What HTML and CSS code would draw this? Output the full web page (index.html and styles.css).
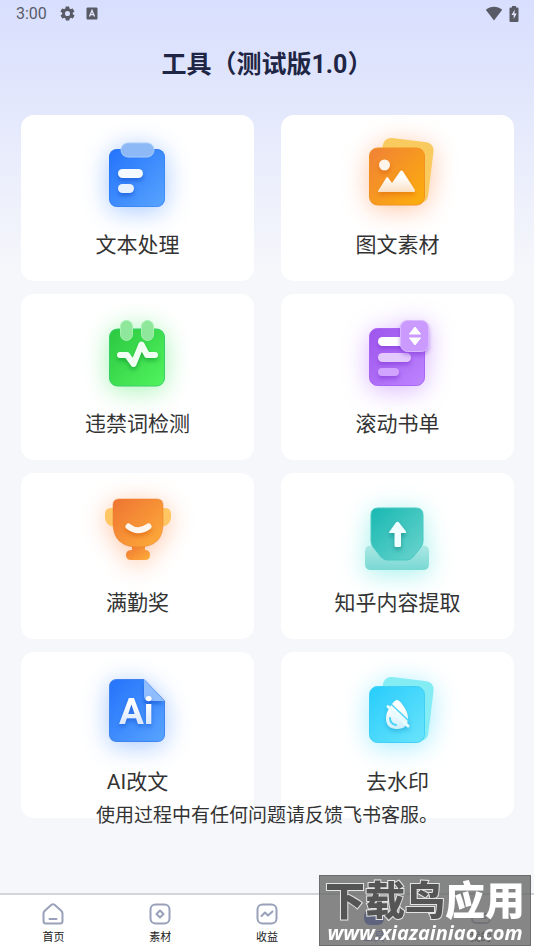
FILE: index.html
```html
<!DOCTYPE html>
<html lang="zh-CN">
  <head>
    <meta charset="UTF-8" />
    <meta name="viewport" content="width=device-width, initial-scale=1.0" />
    <title>工具</title>
    <link rel="stylesheet" href="styles.css">
  </head>
  <body>
    <div class="status-bar">
      <span class="clock">3:00</span>
      <svg class="status-icon" viewBox="0 0 24 24" width="17" height="17">
        <path fill="#585b66" d="M19.4 13a7.500 7.500 0 0 0 0-2l2.100-1.600a.5.5 0 0 0 .1-.7l-2-3.400a.5.5 0 0 0-.6-.2l-2.500 1a7.300 7.300 0 0 0-1.700-1l-.4-2.600a.5.500 0 0 0-.5-.4h-4a.5.500 0 0 0-.5.4l-.4 2.600a7.300 7.300 0 0 0-1.700 1l-2.500-1a.5.5 0 0 0-.6.2l-2 3.400a.5.500 0 0 0 .1.7L4.600 11a7.500 7.500 0 0 0 0 2l-2.100 1.600a.5.500 0 0 0-.1.7l2 3.400c.1.200.4.300.6.200l2.500-1a7.300 7.300 0 0 0 1.700 1l.4 2.600c0 .2.200.4.500.4h4c.3 0 .5-.2.500-.4l.4-2.600a7.300 7.300 0 0 0 1.700-1l2.500 1c.2.1.5 0 .6-.2l2-3.400a.5.500 0 0 0-.1-.7zM12 15.600a3.600 3.600 0 1 1 0-7.200 3.600 3.600 0 0 1 0 7.200z" />
      </svg>
      <svg class="status-icon" viewBox="0 0 12 13" width="12" height="13">
        <rect x="0.500" y="0.500" width="11" height="12" rx="1" fill="#585b66" />
        <path d="M3.500 9.500L6 3.500l2.500 6M4.500 7.700h3" fill="none" stroke="#e2e6fb" stroke-width="1.300" />
      </svg>
      <svg class="status-icon wifi" viewBox="0 0 18 15" width="18" height="15">
        <path d="M9 14.500L.8 3.800C5.500-.2 12.500-.2 17.200 3.800z" fill="#585b66" />
      </svg>
      <svg class="status-icon" viewBox="0 0 10 16" width="10" height="16">
        <path d="M3 0h4v1.500h1.500q1 0 1 1V15q0 1-1 1h-7q-1 0-1-1V2.500q0-1 1-1H3z" fill="#585b66" />
        <path d="M5.800 3.500L2.500 9h2.200v4l3-5.500H5.400z" fill="#e2e6fb" />
      </svg>
    </div>

    <h1>工具（测试版1.0）</h1>

    <main>
      <div class="tools">
        <button type="button" class="card blue">
          <svg viewBox="-2 0 120 100" aria-hidden="true">
            <defs>
              <linearGradient id="blueFill" x1="0" y1="0" x2="1" y2="1">
                <stop offset="0" stop-color="#2473fb" />
                <stop offset="1" stop-color="#58a4ff" />
              </linearGradient>
              <linearGradient id="whiteFade" x1="0" y1="0" x2="0" y2="1">
                <stop offset="0.3" stop-color="#fff" />
                <stop offset="1" stop-color="#fff" stop-opacity="0.75" />
              </linearGradient>
            </defs>
            <rect x="29" y="24" width="56" height="58" rx="8" fill="url(#blueFill)" />
            <rect x="29.500" y="24.500" width="55" height="57" rx="8" fill="none" stroke="#2672e8" stroke-opacity="0.4" />
            <rect x="41" y="18" width="33" height="14" rx="7" fill="#8db9f7" stroke="#a8cbfc" />
            <g class="raised">
              <rect x="38" y="44" width="25" height="9" rx="4.500" fill="#f4f8ff" />
              <rect x="38" y="59" width="16" height="9" rx="4.500" fill="#e8f1ff" />
            </g>
          </svg>
          <span>文本处理</span>
        </button>

        <button type="button" class="card orange">
          <svg viewBox="-2 0 120 100" aria-hidden="true">
            <defs>
              <linearGradient id="photoFill" x1="0" y1="0" x2="1" y2="1">
                <stop offset="0" stop-color="#f08137" />
                <stop offset="1" stop-color="#fdb00a" />
              </linearGradient>
            </defs>
            <rect x="40" y="15" width="51" height="61" rx="8" transform="rotate(7 66 45)" fill="#f9ca5d" />
            <rect x="29.500" y="23" width="55" height="57" rx="8" fill="url(#photoFill)" stroke="#f29222" />
            <g class="raised">
              <circle cx="44.500" cy="40" r="5.500" fill="#fff5ea" />
              <path d="M38 66L46.500 52.500Q47 51.500 48 52.500L52 58 60 46.500Q61.500 44.500 63 46.500L75 65Q75.500 67 74 67H39Q37.500 67 38 66z" fill="url(#whiteFade)" />
            </g>
          </svg>
          <span>图文素材</span>
        </button>

        <button type="button" class="card green">
          <svg viewBox="-2 -1 120 100" aria-hidden="true">
            <defs>
              <linearGradient id="greenFill" x1="0" y1="0" x2="1" y2="1">
                <stop offset="0" stop-color="#2bc841" />
                <stop offset="1" stop-color="#52f45f" />
              </linearGradient>
            </defs>
            <rect x="29.500" y="24" width="55" height="57" rx="8" fill="url(#greenFill)" stroke="#37cf67" />
            <rect x="40.500" y="15.500" width="12" height="20" rx="6" fill="#8ee79b" stroke="#a6f0af" />
            <rect x="61.500" y="15.500" width="12" height="20" rx="6" fill="#8ee79b" stroke="#a6f0af" />
            <path class="raised" d="M40 50H47L53.500 59 61.500 39.500 67 50H75" fill="none" stroke="#f1fff2" stroke-width="6" stroke-linecap="round" stroke-linejoin="round" />
          </svg>
          <span>违禁词检测</span>
        </button>

        <button type="button" class="card purple">
          <svg viewBox="-2 -1 120 100" aria-hidden="true">
            <defs>
              <linearGradient id="purpleFill" x1="0" y1="0" x2="1" y2="1">
                <stop offset="0" stop-color="#9e54ec" />
                <stop offset="1" stop-color="#bd85ff" />
              </linearGradient>
            </defs>
            <rect x="29.500" y="23.500" width="55" height="57" rx="8" fill="url(#purpleFill)" stroke="#aa64f3" />
            <g class="raised">
              <rect x="38" y="32" width="34" height="9" rx="4.500" fill="#fff" />
              <rect x="38" y="48" width="33" height="9" rx="4.500" fill="#e4c9ff" />
              <rect x="38" y="63" width="21" height="8" rx="4" fill="#d1a4ff" />
            </g>
            <rect class="raised" x="60.500" y="15.500" width="28" height="31" rx="7" fill="#cb9aff" stroke="#dab8ff" />
            <path d="M75 22L80.500 29H69.500zM75 40L69.500 33H80.500z" fill="#fff" stroke="#fff" stroke-linejoin="round" />
          </svg>
          <span>滚动书单</span>
        </button>

        <button type="button" class="card orange">
          <svg viewBox="-2 -2 120 100" aria-hidden="true">
            <defs>
              <linearGradient id="cupFill" x1="0" y1="0" x2="1" y2="1">
                <stop offset="0" stop-color="#ee7432" />
                <stop offset="1" stop-color="#feae3a" />
              </linearGradient>
            </defs>
            <path d="M36 23H31Q25 23 25 29V31Q25 42 37 42zM79 23H85Q91 23 91 29V31Q91 42 78 42z" fill="#ffc663" />
            <path d="M52 60H65V65Q70 65 70 70 70 75 65 75H51Q46 75 46 70 46 65 52 65z" fill="url(#cupFill)" />
            <path d="M39 14H77Q83 14 83 20V39Q83 62 58 62 33 62 33 38V20Q33 14 39 14z" fill="url(#cupFill)" stroke="#e87d2b" stroke-opacity="0.5" />
            <path class="raised" d="M48.500 41.500Q58 49 68.500 41.500" fill="none" stroke="#fff7ed" stroke-width="6" stroke-linecap="round" />
          </svg>
          <span>满勤奖</span>
        </button>

        <button type="button" class="card teal">
          <svg viewBox="-2 -2 120 100" aria-hidden="true">
            <defs>
              <linearGradient id="tealFill" x1="0" y1="0" x2="1" y2="1">
                <stop offset="0" stop-color="#18b8b2" />
                <stop offset="1" stop-color="#6bd4cd" />
              </linearGradient>
              <linearGradient id="trayFill" x1="0" y1="0" x2="0" y2="1">
                <stop offset="0" stop-color="#abe8e4" />
                <stop offset="1" stop-color="#79d8d3" />
              </linearGradient>
            </defs>
            <path d="M31 60.500H83Q89 60.500 89 66.500V79Q89 85 83 85H31Q25 85 25 79V66.500Q25 60.500 31 60.500z" fill="url(#trayFill)" />
            <path d="M38 23H76Q83 23 83 30V56Q83 59 81 62L73 72Q70 75 67 75H47Q44 75 41 72L33 62Q31 59 31 56V30Q31 23 38 23z" fill="url(#tealFill)" stroke="#49c9c2" />
            <path class="raised" d="M56 37.500Q57.500 36 59 37.500L66 46.500Q66.500 48 65 48H61V60.500Q61 62 59.500 62H56Q54.500 62 54.500 60.500V48H50Q48.500 48 49.500 46.500z" fill="#f0ffff" />
          </svg>
          <span>知乎内容提取</span>
        </button>

        <button type="button" class="card blue">
          <svg viewBox="-2 -3 120 100" aria-hidden="true">
            <path d="M37 14.500H64L84.500 36V69Q84.500 76.500 77 76.500H37Q29.500 76.500 29.500 69V22Q29.500 14.500 37 14.500z" fill="url(#blueFill)" stroke="#3f84ee" />
            <path class="raised" d="M64 14.500L84.500 36H69Q64 36 64 31z" fill="#90bdfd" />
            <text class="raised ai-text" x="39" y="59" fill="url(#whiteFade)">Ai</text>
          </svg>
          <span>AI改文</span>
        </button>

        <button type="button" class="card cyan">
          <svg viewBox="-2 -3 120 100" aria-hidden="true">
            <defs>
              <linearGradient id="cyanFill" x1="0" y1="0" x2="1" y2="1">
                <stop offset="0" stop-color="#27ccfc" />
                <stop offset="1" stop-color="#6ae4fb" />
              </linearGradient>
            </defs>
            <rect x="40" y="14" width="51" height="60" rx="8" transform="rotate(7 66 45)" fill="#84edf4" />
            <rect x="29.500" y="21.500" width="55" height="56" rx="8" fill="url(#cyanFill)" stroke="#40d0f5" />
            <g class="raised">
              <path d="M57 35Q59 35 62 39 68 47 68 53 68 64 57 64 46 64 46 53 46 47 52 39 55 35 57 35z" fill="url(#whiteFade)" />
              <path d="M50 53Q50 59 56 60" fill="none" stroke="#4bd5fa" stroke-width="2" stroke-linecap="round" />
              <path d="M51 39L70 57" stroke="#4bd5fa" stroke-width="1.500" />
              <path d="M48 41.500L68 61" stroke="#e8fcff" stroke-width="3" stroke-linecap="round" />
            </g>
          </svg>
          <span>去水印</span>
        </button>
      </div>
      <p class="note">使用过程中有任何问题请反馈飞书客服。</p>
    </main>

    <nav class="tab-bar">
      <a href="#">
        <svg viewBox="0 0 22 22" aria-hidden="true">
          <path d="M3 7.500L9.500 1.800Q11 .7 12.500 1.800L19 7.500Q20.500 9 20.500 10.500V18Q20.500 20.500 18 20.500H4Q1.500 20.500 1.500 18V10.500Q1.500 9 3 7.500zM7.500 16H14.500" />
        </svg>
        首页
      </a>
      <a href="#">
        <svg viewBox="0 0 22 22" aria-hidden="true">
          <rect x="1.500" y="1.500" width="19" height="19" rx="5" />
          <path d="M11 7.500L14.500 11 11 14.500 7.500 11z" />
        </svg>
        素材
      </a>
      <a href="#">
        <svg viewBox="0 0 22 22" aria-hidden="true">
          <rect x="1.500" y="1.500" width="19" height="19" rx="5" />
          <path d="M5.500 13L9 9.500 12 12.500 16.500 8.500" />
        </svg>
        收益
      </a>
      <a href="#" class="active">
        <svg viewBox="0 0 22 22" aria-hidden="true">
          <rect x="2" y="8" width="18" height="13" rx="5" />
          <path d="M7 7V4Q7 1.500 11 1.500T15 4V7" />
        </svg>
        工具
      </a>
      <a href="#">
        <svg viewBox="0 0 22 22" aria-hidden="true">
          <rect x="2" y="11" width="18" height="9" rx="4" />
          <path d="M12 15H16" />
        </svg>
        我的
      </a>
    </nav>

    <div class="watermark">
      <div class="mark-name"><span>下载鸟</span>应用</div>
      <div class="mark-url">www.xiazainiao.com</div>
    </div>
  </body>
</html>
```
FILE: styles.css
```css
* {
  margin: 0;
  padding: 0;
  box-sizing: border-box;
}
body {
  display: flex;
  flex-direction: column;
  min-height: 100vh;
  font-family: Roboto, "Noto Sans CJK SC", sans-serif;
  color: #333;
  background: #f6f7fb linear-gradient(#d8dffe, #e2e7fc 100px, #f6f7fb 270px) no-repeat;
}
.status-bar {
  display: flex;
  align-items: center;
  height: 27px;
  padding: 0 15px 0 16px;
  color: #585b66;
}
.clock {
  font-size: 16px;
  margin-right: 12px;
}
.status-icon {
  margin-right: 10px;
}
.status-icon:last-child {
  margin-right: 0;
}
.wifi {
  margin-left: auto;
  margin-right: 6px;
}
h1 {
  height: 88px;
  padding-top: 20px;
  font-size: 25px;
  line-height: 36px;
  font-weight: 700;
  text-align: center;
  color: #1f2544;
}
.tools {
  display: grid;
  grid-template-columns: 1fr 1fr;
  gap: 13px 27px;
  padding: 0 20px 0 21px;
}
.card {
  display: flex;
  flex-direction: column;
  align-items: center;
  height: 166px;
  padding-top: 10px;
  border: none;
  border-radius: 13px;
  background: #fff;
  font-family: inherit;
  font-size: 21px;
  line-height: 32px;
  color: #333;
  cursor: pointer;
}
.card svg {
  width: 120px;
  height: 100px;
  margin-bottom: 4px;
  overflow: visible;
  filter: drop-shadow(0 4px 13px var(--glow));
}
.blue {
  --glow: rgba(60, 135, 255, 0.45);
  --shade: rgba(10, 70, 200, 0.5);
}
.orange {
  --glow: rgba(255, 130, 60, 0.45);
  --shade: rgba(210, 80, 0, 0.45);
}
.green {
  --glow: rgba(60, 230, 90, 0.45);
  --shade: rgba(0, 130, 30, 0.45);
}
.purple {
  --glow: rgba(170, 90, 255, 0.45);
  --shade: rgba(110, 30, 200, 0.4);
}
.teal {
  --glow: rgba(50, 225, 215, 0.45);
  --shade: rgba(0, 110, 110, 0.45);
}
.cyan {
  --glow: rgba(60, 215, 255, 0.45);
  --shade: rgba(0, 130, 190, 0.4);
}
.raised {
  filter: drop-shadow(0 3px 2px var(--shade));
}
.ai-text {
  font-family: Roboto, sans-serif;
  font-size: 37px;
  font-weight: 700;
}
/* last line sits on the bottom edge of the cards */
.note {
  position: relative;
  margin-top: -16px;
  font-size: 19px;
  line-height: 28px;
  text-align: center;
}
.tab-bar {
  display: flex;
  height: 57px;
  margin-top: auto;
  padding-top: 8px;
  border-top: 2px solid #d3d5da;
  background: #fff;
}
.tab-bar a {
  flex: 1;
  display: flex;
  flex-direction: column;
  align-items: center;
  gap: 5px;
  font-size: 11px;
  line-height: 16px;
  color: #222;
  text-decoration: none;
}
.tab-bar svg {
  width: 22px;
  height: 22px;
  fill: none;
  stroke: #98a1b9;
  stroke-width: 2;
  stroke-linecap: round;
  stroke-linejoin: round;
}
.tab-bar .active {
  color: #3f55d8;
}
.tab-bar .active svg {
  fill: #3f55d8;
  stroke: #3f55d8;
}
.watermark {
  position: fixed;
  right: 3px;
  bottom: 4px;
  width: 212px;
  height: 71px;
  border: 1px solid #6c6c6c;
  background: rgba(104, 104, 104, 0.8);
  color: #fff;
  text-align: center;
  white-space: nowrap;
}
.mark-name {
  font-size: 40px;
  line-height: 52px;
  height: 46px;
  font-weight: 900;
}
.mark-name span {
  color: #555;
  -webkit-text-stroke: 2px #e4e4e4;
  paint-order: stroke fill;
}
.mark-url {
  font-family: "Open Sans", sans-serif;
  font-size: 20px;
  line-height: 22px;
  font-weight: 700;
  font-style: italic;
}
```
